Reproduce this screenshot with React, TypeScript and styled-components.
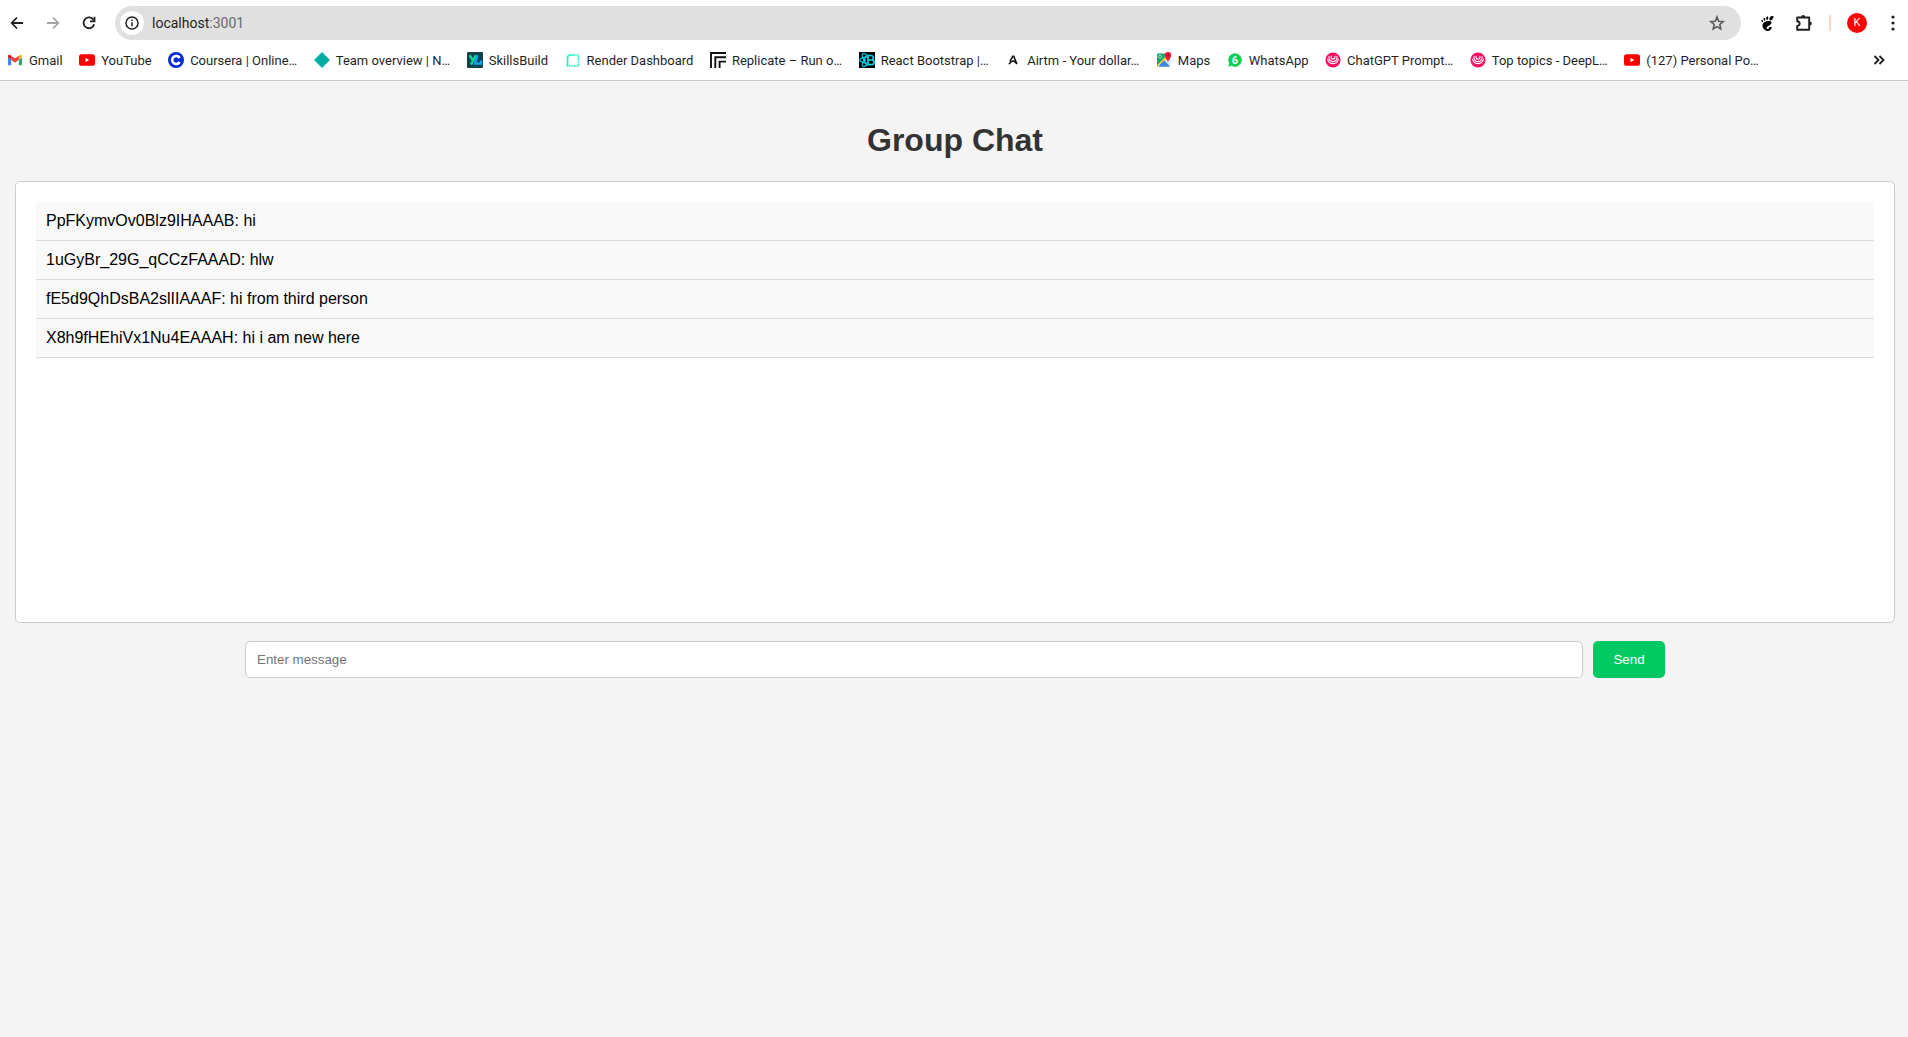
import React from "react";
import styled, { createGlobalStyle } from "styled-components";
import { SiGnome } from "react-icons/si";

const GlobalStyle = createGlobalStyle`
  *, *::before, *::after { box-sizing: border-box; }
  body {
    margin: 0;
    background: #f4f4f4;
    font-family: "Liberation Sans", Arial, sans-serif;
  }
`;

const BrowserHeader = styled.header`
  background: #fff;
  border-bottom: 1px solid #cacaca;
  font-family: Roboto, sans-serif;
  color: #1f1f1f;
`;

const Toolbar = styled.div`
  display: flex;
  align-items: center;
  gap: 8px;
  height: 46px;
  padding: 0 1px 0 3px;
`;

const ToolButton = styled.button`
  display: flex;
  flex: none;
  align-items: center;
  justify-content: center;
  width: 28px;
  height: 28px;
  padding: 0;
  border: 0;
  border-radius: 50%;
  background: transparent;
  color: ${(p) => p.color || "#1f1f1f"};
`;

const AddressBar = styled.div`
  display: flex;
  flex: 1;
  align-items: center;
  height: 34px;
  margin: 0 4px;
  padding: 0 10px 0 5px;
  border-radius: 17px;
  background: #e0e0e0;
`;

const SiteInfo = styled.button`
  display: flex;
  align-items: center;
  justify-content: center;
  width: 24px;
  height: 24px;
  padding: 0;
  border: 0;
  border-radius: 50%;
  background: #fff;
  color: #1f1f1f;
`;

const Url = styled.span`
  flex: 1;
  padding-left: 8px;
  font-size: 14px;
  line-height: 20px;
`;

const Port = styled.span`
  color: #6a6a6a;
`;

const Separator = styled.span`
  width: 2px;
  height: 16px;
  margin: 0 4px;
  background: #ffd5c6;
`;

const Avatar = styled.span`
  width: 20px;
  height: 20px;
  border-radius: 50%;
  background: #f00;
  color: #fff;
  font: 11px/20px Roboto, sans-serif;
  text-align: center;
`;

const Bookmarks = styled.nav`
  display: flex;
  align-items: center;
  justify-content: space-between;
  height: 34px;
  padding: 0 15px 6px 7px;
`;

const BookmarkList = styled.ul`
  display: flex;
  flex: 1;
  justify-content: space-between;
  max-width: 1752px;
  margin: 0;
  padding: 0;
  list-style: none;
`;

const Bookmark = styled.a`
  display: flex;
  align-items: center;
  gap: 6px;
  color: #1f1f1f;
  font-size: 13px;
  line-height: 16px;
  text-decoration: none;
  white-space: nowrap;
`;

const BookmarkLabel = styled.span`
  padding-top: 2px;
`;

const Main = styled.main`
  padding: 20px 13px 20px 15px;
`;

const Title = styled.h1`
  margin: 21px 0 23px;
  color: #333;
  font-size: 32px;
  line-height: 36px;
  text-align: center;
`;

const MessagePanel = styled.section`
  min-height: 442px;
  padding: 20px;
  border: 1px solid #ccc;
  border-radius: 5px;
  background: #fff;
`;

const MessageList = styled.ul`
  margin: 0;
  padding: 0;
  list-style: none;
`;

const Message = styled.li`
  padding: 10px;
  border-bottom: 1px solid #ddd;
  background: #f9f9f9;
  color: #000;
  font-size: 16px;
  line-height: 18px;
`;

const MessageForm = styled.form`
  display: flex;
  gap: 10px;
  width: calc(100% - 460px);
  margin: 18px auto 0;
`;

const MessageInput = styled.input`
  flex: 1;
  height: 37px;
  padding: 10px 11px;
  border: 1px solid #ccc;
  border-radius: 5px;
  background: #fff;
  font-family: inherit;
  &::placeholder { color: #757575; }
`;

const SendButton = styled.button`
  min-width: 72px;
  padding: 10px 20px;
  border: 0;
  border-radius: 5px;
  background: #03c962;
  color: #fff;
  font-family: inherit;
`;

const Glyph = ({ size = 16, children }: { size?: number; children: React.ReactNode }) => (
  <svg width={size} height={size} viewBox={`0 0 ${size} ${size}`} fill="none" aria-hidden="true">
    {children}
  </svg>
);

const YouTubeIcon = () => (
  <Glyph>
    <rect x="0" y="2.2" width="16" height="11.6" rx="2.6" fill="#f00" />
    <path d="M6.5 5.8v4.4L10.2 8z" fill="#fff" />
  </Glyph>
);

const DeepLearningIcon = () => (
  <Glyph>
    <circle cx="8" cy="8" r="7.6" fill="#f9105f" />
    <g stroke="#fff" strokeWidth="1.1" strokeLinecap="round">
      <path d="M2.6 7.2a5.5 5.5 0 0 0 10.8 0" />
      <path d="M4 4.6a4.1 4.1 0 1 0 8 0" />
      <path d="M6.2 4.2a2 2 0 1 0 3.6 0" />
    </g>
  </Glyph>
);

const bookmarks: { label: string; icon: React.ReactNode }[] = [
  {
    label: "Gmail",
    icon: (
      <svg width="16" height="16" viewBox="46 25 100 100" aria-hidden="true">
        <path fill="#4285f4" d="M58 108h14V74L52 59v43c0 3.32 2.69 6 6 6" />
        <path fill="#34a853" d="M120 108h14c3.32 0 6-2.69 6-6V59l-20 15" />
        <path fill="#fbbc04" d="M120 48v26l20-15v-8c0-7.42-8.47-11.65-14.4-7.2" />
        <path fill="#ea4335" d="M72 74V48l24 18 24-18v26L96 92" />
        <path fill="#c5221f" d="M52 51v8l20 15V48l-5.6-4.2c-5.94-4.45-14.4-.22-14.4 7.2" />
      </svg>
    ),
  },
  { label: "YouTube", icon: <YouTubeIcon /> },
  {
    label: "Coursera | Online…",
    icon: (
      <Glyph>
        <circle cx="8" cy="8" r="8" fill="#0b2bd4" />
        <path d="M11.6 10a4 4 0 1 1 0-4" stroke="#fff" strokeWidth="2.6" />
      </Glyph>
    ),
  },
  {
    label: "Team overview | N…",
    icon: (
      <Glyph>
        <path d="M8 1l7 7-7 7-7-7z" fill="#05ada2" stroke="#05ada2" strokeWidth="1.4" strokeLinejoin="round" />
      </Glyph>
    ),
  },
  {
    label: "SkillsBuild",
    icon: (
      <Glyph>
        <rect width="16" height="16" rx="1" fill="#15414d" />
        <path d="M2.5 3.2l3.4 5M8.8 3.2L4 12.6" stroke="#08d98f" strokeWidth="2.5" />
        <path d="M10.4 3.2L8.2 11.6H14v-3" stroke="#12a5f4" strokeWidth="2.4" />
      </Glyph>
    ),
  },
  {
    label: "Render Dashboard",
    icon: (
      <Glyph>
        <path d="M2.5 13V5.8A2.8 2.8 0 0 1 5.3 3h5.2" stroke="#1ff5bd" strokeWidth="1.7" />
        <path d="M11.6 3h1.9v10.9h-11V12" stroke="#1ff5bd" strokeWidth="1.7" strokeDasharray="1.7 .9" />
      </Glyph>
    ),
  },
  {
    label: "Replicate – Run o…",
    icon: (
      <Glyph>
        <path d="M1 16V1h15M5.3 16V5.3H16M9.6 16V9.6H16" stroke="#111" strokeWidth="1.9" />
      </Glyph>
    ),
  },
  {
    label: "React Bootstrap |…",
    icon: (
      <Glyph>
        <rect width="16" height="16" fill="#000" />
        <g stroke="#0bd3e8" strokeWidth="1.2">
          <path d="M9 3.5h3.2a2.2 2.2 0 0 1 .6 4.3 2.4 2.4 0 0 1-.4 4.9H9zM9 8h3.6" strokeWidth="1.7" />
          <path d="M8.500 5.200C4 5.400.8 6.700.8 8.200s3.400 3 7.700 3" />
          <path d="M8 3.600C6.600 1.800 4.600 1 3.800 1.800c-1 .9-.4 3.800 1.100 6.800 1 2.200 2.300 4 3.400 5" />
          <path d="M8 12.700c-1.500 1.700-3.300 2.300-4.100 1.600-1.200-1-.4-4 1.200-7C6 5.700 7 4.300 8 3.500" />
        </g>
        <circle cx="5.7" cy="8.2" r="1.2" fill="#0bd3e8" />
      </Glyph>
    ),
  },
  {
    label: "Airtm - Your dollar…",
    icon: (
      <Glyph>
        <path d="M4.900 9.600L7.800 4.200h.9l3.200 7.900" stroke="#111" strokeWidth="1.600" />
        <path d="M3.800 12c1.600-.9 2.700-3 4.300-3.100 1.300 0 2 1.200 3.600 2.400" stroke="#111" strokeWidth="1.500" />
      </Glyph>
    ),
  },
  {
    label: "Maps",
    icon: (
      <Glyph>
        <rect x="1" y="1.5" width="13" height="13" rx="1" fill="#17a668" />
        <path d="M7.5 8l6.500 6.500V8l-3-3z" fill="#dfe4ea" />
        <path d="M1 13.600l8.600-9 1.700 1.700-8.200 8.200H1.600z" fill="#ffd43c" />
        <path d="M7.800 8.200l6 6.300H2.500z" fill="#3f83f0" />
        <circle cx="4" cy="4.700" r="1.400" stroke="#bfe8d4" strokeWidth=".8" />
        <path d="M12 10.500C11.700 7.800 8.800 6.200 8.800 3.300a3.200 3.200 0 0 1 6.400 0c0 2.900-2.900 4.500-3.200 7.200z" fill="#ea1d3b" />
        <circle cx="12" cy="3.300" r="1.100" fill="#8c1020" />
      </Glyph>
    ),
  },
  {
    label: "WhatsApp",
    icon: (
      <Glyph>
        <path d="M8 1.300a6.700 6.700 0 1 1-3.300 12.500l-3.400.9.900-3.500A6.700 6.700 0 0 1 8 1.300z" fill="#06cf54" />
        <text x="8" y="12" fill="#fff" fontFamily="Roboto, sans-serif" fontSize="11" fontWeight="700" textAnchor="middle">
          6
        </text>
      </Glyph>
    ),
  },
  { label: "ChatGPT Prompt…", icon: <DeepLearningIcon /> },
  { label: "Top topics - DeepL…", icon: <DeepLearningIcon /> },
  { label: "(127) Personal Po…", icon: <YouTubeIcon /> },
];

const messages = [
  { sender: "PpFKymvOv0Blz9IHAAAB", text: "hi" },
  { sender: "1uGyBr_29G_qCCzFAAAD", text: "hlw" },
  { sender: "fE5d9QhDsBA2slIIAAAF", text: "hi from third person" },
  { sender: "X8h9fHEhiVx1Nu4EAAAH", text: "hi i am new here" },
];

export default function App() {
  return (
    <>
      <GlobalStyle />
      <BrowserHeader>
        <Toolbar>
          <ToolButton aria-label="Back">
            <Glyph>
              <path d="M14 8H3M8 2.500L2.700 8 8 13.500" stroke="currentColor" strokeWidth="1.8" />
            </Glyph>
          </ToolButton>
          <ToolButton aria-label="Forward" color="#a3a3a3">
            <Glyph>
              <path d="M2 8h11M8 2.500L13.300 8 8 13.500" stroke="currentColor" strokeWidth="1.8" />
            </Glyph>
          </ToolButton>
          <ToolButton aria-label="Reload">
            <Glyph>
              <path d="M13.200 9.300A5.400 5.400 0 1 1 12.600 5" stroke="currentColor" strokeWidth="1.8" />
              <path d="M13.500 1.800v4.600H8.900" stroke="currentColor" strokeWidth="1.8" />
            </Glyph>
          </ToolButton>
          <AddressBar>
            <SiteInfo aria-label="View site information">
              <Glyph>
                <circle cx="8" cy="8" r="6" stroke="currentColor" strokeWidth="1.5" />
                <path d="M8 7.200v4M8 4.600v1.500" stroke="currentColor" strokeWidth="1.5" />
              </Glyph>
            </SiteInfo>
            <Url>
              localhost<Port>:3001</Port>
            </Url>
            <ToolButton aria-label="Bookmark this tab" color="#5a5a5a">
              <Glyph size={18}>
                <path
                  d="M9 3l1.700 4.200 4.500.4-3.400 2.900 1 4.400L9 12.600l-3.800 2.300 1-4.400-3.400-2.900 4.500-.4z"
                  stroke="currentColor"
                  strokeWidth="1.6"
                />
              </Glyph>
            </ToolButton>
          </AddressBar>
          <ToolButton aria-label="GNOME Shell integration" color="#000">
            <SiGnome size={15} />
          </ToolButton>
          <ToolButton aria-label="Extensions">
            <Glyph size={20}>
              <path
                d="M4.200 4.500h12v12.200h-12V13c1.700-.2 2.500-1.200 2.500-2.400S5.900 8.400 4.200 8.200z"
                stroke="currentColor"
                strokeWidth="1.9"
                strokeLinejoin="round"
              />
              <path d="M8.200 4a2 2 0 0 1 4 0zM16.800 8.400a2 2 0 0 1 0 4z" fill="currentColor" />
            </Glyph>
          </ToolButton>
          <Separator />
          <ToolButton aria-label="Profile">
            <Avatar>K</Avatar>
          </ToolButton>
          <ToolButton aria-label="Menu">
            <Glyph>
              <circle cx="8" cy="2" r="1.6" fill="currentColor" />
              <circle cx="8" cy="8" r="1.6" fill="currentColor" />
              <circle cx="8" cy="14" r="1.6" fill="currentColor" />
            </Glyph>
          </ToolButton>
        </Toolbar>
        <Bookmarks aria-label="Bookmarks">
          <BookmarkList>
            {bookmarks.map((b) => (
              <li key={b.label}>
                <Bookmark href="#">
                  {b.icon}
                  <BookmarkLabel>{b.label}</BookmarkLabel>
                </Bookmark>
              </li>
            ))}
          </BookmarkList>
          <ToolButton aria-label="More bookmarks">
            <Glyph>
              <path d="M3.500 4l4 4-4 4M8.500 4l4 4-4 4" stroke="currentColor" strokeWidth="1.8" />
            </Glyph>
          </ToolButton>
        </Bookmarks>
      </BrowserHeader>
      <Main>
        <Title>Group Chat</Title>
        <MessagePanel aria-label="Messages">
          <MessageList>
            {messages.map((m) => (
              <Message key={m.sender}>
                {m.sender}: {m.text}
              </Message>
            ))}
          </MessageList>
        </MessagePanel>
        <MessageForm onSubmit={(e) => e.preventDefault()}>
          <MessageInput type="text" placeholder="Enter message" aria-label="Enter message" />
          <SendButton type="submit">Send</SendButton>
        </MessageForm>
      </Main>
    </>
  );
}
